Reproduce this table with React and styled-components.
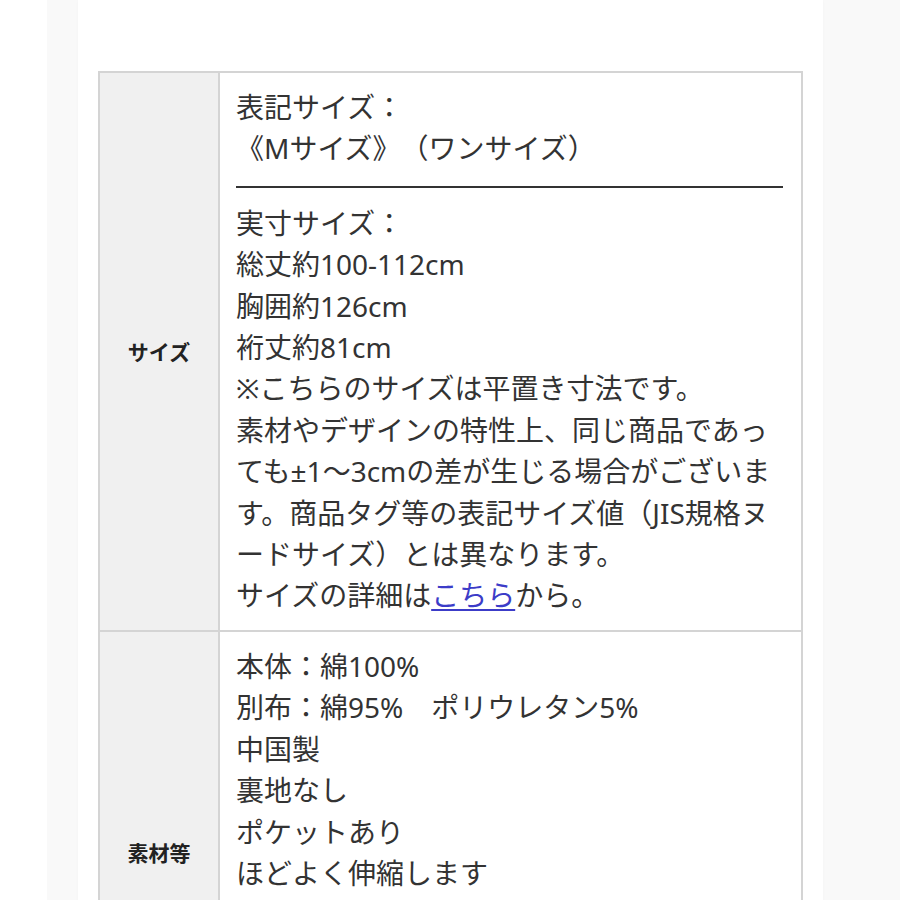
import React from "react";
import styled, { createGlobalStyle } from "styled-components";

const Global = createGlobalStyle`
  html, body { margin: 0; padding: 0; background: #fff; }
  body { font-family: "Noto Sans", "Noto Sans CJK JP", sans-serif; }
`;

const Page = styled.div`
  margin-left: 47px;
  min-height: 900px;
  padding-left: 31px;
  display: flex;
  background: #f9f9f9;
`;

const Content = styled.main`
  width: 745px;
  background: #fff;
  box-shadow: 0 0 3px rgba(0, 0, 0, 0.025);
  padding: 71px 20px 0 20px;
  box-sizing: border-box;
`;

const Table = styled.table`
  border-collapse: collapse;
  width: 705px;
  table-layout: fixed;
  color: #333;
`;

const HeadCell = styled.th`
  width: 118px;
  background: #f0f0f0;
  border: 2px solid #d4d4d4;
  font-family: "Noto Sans CJK JP", sans-serif;
  font-size: 21px;
  font-weight: 700;
  color: #222;
  text-align: center;
  vertical-align: middle;
  padding: 0;
`;

const DataCell = styled.td`
  border: 2px solid #d4d4d4;
  padding: 14px 18px 13px 16px;
  font-size: 28px;
  line-height: 41.4px;
  vertical-align: top;
  text-spacing-trim: space-all;
`;

const Line = styled.span`
  display: block;
  white-space: nowrap;
`;

const Rule = styled.hr`
  border: 0;
  height: 2px;
  background: #333;
  margin: 16px 0 15px;
`;

const Link = styled.a`
  color: #3c3cc8;
  text-decoration: underline;
  text-underline-offset: 3px;
`;

const sizeLines = [
  "総丈約100-112cm",
  "胸囲約126cm",
  "裄丈約81cm",
  "※こちらのサイズは平置き寸法です。",
  "素材やデザインの特性上、同じ商品であっ",
  "ても±1～3cmの差が生じる場合がございま",
  "す。商品タグ等の表記サイズ値（JIS規格ヌ",
  "ードサイズ）とは異なります。",
];

const materialLines = [
  "本体：綿100%",
  "別布：綿95%　ポリウレタン5%",
  "中国製",
  "裏地なし",
  "ポケットあり",
  "ほどよく伸縮します",
  "透け感なし",
  "光沢感なし",
  "厚み：普通",
  "洗濯：手洗い可",
];

export default function App() {
  return (
    <>
      <Global />
      <Page>
        <Content>
          <Table>
            <tbody>
              <tr>
                <HeadCell>サイズ</HeadCell>
                <DataCell>
                  <Line>表記サイズ：</Line>
                  <Line>《Mサイズ》（ワンサイズ）</Line>
                  <Rule />
                  <Line>実寸サイズ：</Line>
                  {sizeLines.map((l) => (
                    <Line key={l}>{l}</Line>
                  ))}
                  <Line>
                    サイズの詳細は<Link href="#">こちら</Link>から。
                  </Line>
                </DataCell>
              </tr>
              <tr>
                <HeadCell>素材等</HeadCell>
                <DataCell>
                  {materialLines.map((l) => (
                    <Line key={l}>{l}</Line>
                  ))}
                </DataCell>
              </tr>
            </tbody>
          </Table>
        </Content>
      </Page>
    </>
  );
}
